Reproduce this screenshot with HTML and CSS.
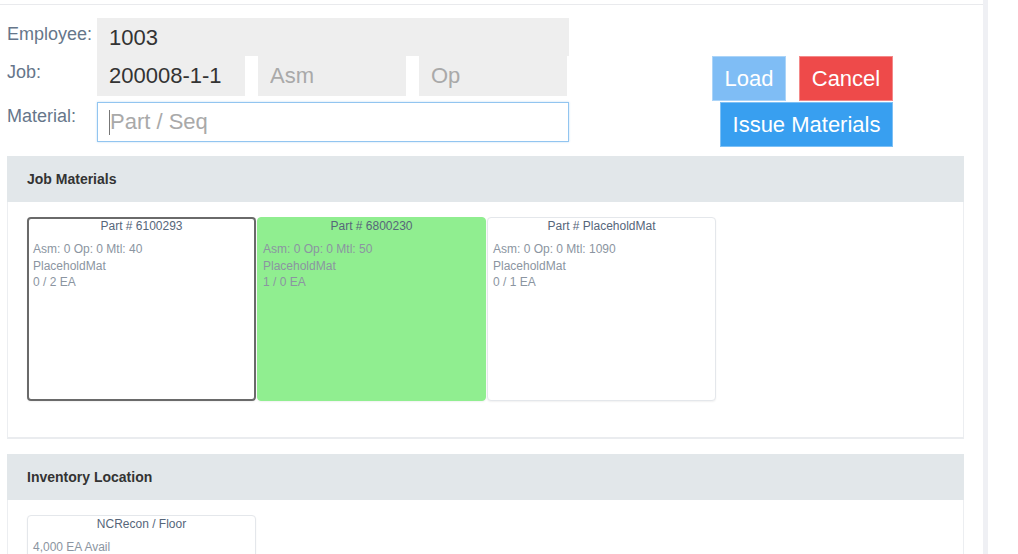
FILE: index.html
```html
<!DOCTYPE html>
<html lang="en">

<head>
    <meta charset="UTF-8">
    <meta name="viewport" content="width=device-width, initial-scale=1.0">
    <title>Issue Materials</title>
    <link rel="stylesheet" href="styles.css">
</head>

<body>
    <div class="layout">
        <div class="main">
            <form class="issue-form" onsubmit="return false">
                <div class="fields">
                    <div class="field-row">
                        <label class="field-label" for="employee">Employee:</label>
                        <input type="text" id="employee" class="box box-full" value="1003" readonly>
                    </div>
                    <div class="field-row">
                        <label class="field-label" for="job">Job:</label>
                        <div class="job-group">
                            <input type="text" id="job" class="box" value="200008-1-1" readonly>
                            <input type="text" id="asm" class="box" placeholder="Asm" readonly>
                            <input type="text" id="op" class="box" placeholder="Op" readonly>
                        </div>
                    </div>
                    <div class="field-row material-row">
                        <label class="field-label" for="material">Material:</label>
                        <div class="material-wrap">
                            <input type="text" id="material" class="box material-input" placeholder="Part / Seq">
                            <span class="caret"></span>
                        </div>
                    </div>
                </div>
                <div class="actions">
                    <button type="button" class="btn btn-load">Load</button>
                    <button type="button" class="btn btn-cancel">Cancel</button>
                    <button type="submit" class="btn btn-issue">Issue Materials</button>
                </div>
            </form>

            <div class="panel">
                <div class="panel-header">Job Materials</div>
                <div class="panel-body">
                    <div class="card-list">
                        <div class="mat-card selected">
                            <div class="card-title">Part # 6100293</div>
                            <div class="card-line">Asm: 0 Op: 0 Mtl: 40</div>
                            <div class="card-line">PlaceholdMat</div>
                            <div class="card-line">0 / 2 EA</div>
                        </div>
                        <div class="mat-card issued">
                            <div class="card-title">Part # 6800230</div>
                            <div class="card-line">Asm: 0 Op: 0 Mtl: 50</div>
                            <div class="card-line">PlaceholdMat</div>
                            <div class="card-line">1 / 0 EA</div>
                        </div>
                        <div class="mat-card">
                            <div class="card-title">Part # PlaceholdMat</div>
                            <div class="card-line">Asm: 0 Op: 0 Mtl: 1090</div>
                            <div class="card-line">PlaceholdMat</div>
                            <div class="card-line">0 / 1 EA</div>
                        </div>
                    </div>
                </div>
            </div>

            <div class="panel">
                <div class="panel-header">Inventory Location</div>
                <div class="panel-body">
                    <div class="card-list">
                        <div class="loc-card">
                            <div class="card-title">NCRecon / Floor</div>
                            <div class="card-line">4,000 EA Avail</div>
                        </div>
                    </div>
                </div>
            </div>
        </div>
        <div class="side-strip"></div>
    </div>
</body>

</html>
```

FILE: styles.css
```css
html,
body {
    margin: 0;
    height: 100%;
    overflow: hidden;
    background-color: #fff;
}

body {
    font-family: "Liberation Sans", Arial, sans-serif;
    color: #333;
}

.layout {
    display: flex;
    height: 100%;
}

.main {
    width: 983px;
    margin-top: 4px;
    border-top: 1px solid #e9eaed;
}

.side-strip {
    width: 5px;
    background-color: #eff0f4;
}

/* top form */
.issue-form {
    display: flex;
    padding-top: 13px;
}

.fields {
    width: 569px;
}

.field-row {
    display: flex;
}

.field-label {
    width: 97px;
    padding: 6px 0 0 7px;
    box-sizing: border-box;
    font-size: 18px;
    color: #66768a;
    white-space: nowrap;
}

.box {
    height: 38px;
    padding: 0 12px;
    border: none;
    background-color: #eee;
    font-family: "Liberation Sans", Arial, sans-serif;
    font-size: 22px;
    color: #333;
    box-sizing: border-box;
    outline: none;
}

.box::placeholder {
    color: #a9a9a9;
}

.box-full {
    width: 472px;
    padding-top: 2px;
}

.job-group {
    display: flex;
    gap: 13px;
}

.job-group .box {
    width: 148px;
    height: 40px;
}

.material-row {
    margin-top: 6px;
}

.material-row .field-label {
    padding-top: 4px;
}

.material-wrap {
    position: relative;
}

.material-input {
    width: 472px;
    height: 40px;
    background-color: #fff;
    border: 1px solid #92c5f0;
    box-shadow: 0 0 2px rgba(102, 175, 233, 0.4);
}

.caret {
    position: absolute;
    left: 12px;
    top: 8px;
    width: 1px;
    height: 25px;
    background-color: #777;
}

.actions {
    width: 181px;
    margin-left: 143px;
    padding-top: 38px;
    display: flex;
    flex-wrap: wrap;
    justify-content: space-between;
    align-content: flex-start;
    row-gap: 1px;
}

.btn {
    height: 45px;
    border: 1px solid rgba(255, 255, 255, 0.35);
    color: #fff;
    font-family: "Liberation Sans", Arial, sans-serif;
    font-size: 22px;
    cursor: pointer;
    padding: 0;
}

.btn-load {
    width: 74px;
    background-color: #7fbdf5;
}

.btn-cancel {
    width: 94px;
    background-color: #ee4a4a;
}

.btn-issue {
    width: 173px;
    margin-left: auto;
    background-color: #389ff0;
}

/* panels */
.panel {
    margin: 9px 19px 15px 7px;
}

.panel + .panel {
    margin-top: 0;
}

.panel-header {
    height: 46px;
    line-height: 46px;
    padding-left: 20px;
    background-color: #e2e7ea;
    font-size: 14px;
    font-weight: bold;
    color: #333;
}

.panel-body {
    border: 1px solid #eceef1;
    border-top: none;
    border-bottom: 2px solid #eaecef;
    padding: 15px 19px 36px 19px;
}

.card-list {
    display: flex;
    gap: 1px;
}

.mat-card,
.loc-card {
    width: 229px;
    height: 184px;
    box-sizing: border-box;
    padding: 0 5px;
    border: 1px solid #e4e7eb;
    border-radius: 4px;
    box-shadow: 0 1px 2px rgba(0, 0, 0, 0.06);
    background-color: #fff;
}

.mat-card.selected {
    border: 2px solid #6a6a6a;
    padding: 0 4px;
}

.mat-card.selected .card-title {
    margin-top: -1px;
}

.mat-card.issued {
    background-color: #90ee90;
    border-color: #90ee90;
}

.card-title {
    text-align: center;
    font-size: 12px;
    line-height: 16px;
    color: #56667a;
    margin-bottom: 7px;
}

.card-line {
    font-size: 12px;
    line-height: 16.5px;
    color: #8b95a1;
}
```
